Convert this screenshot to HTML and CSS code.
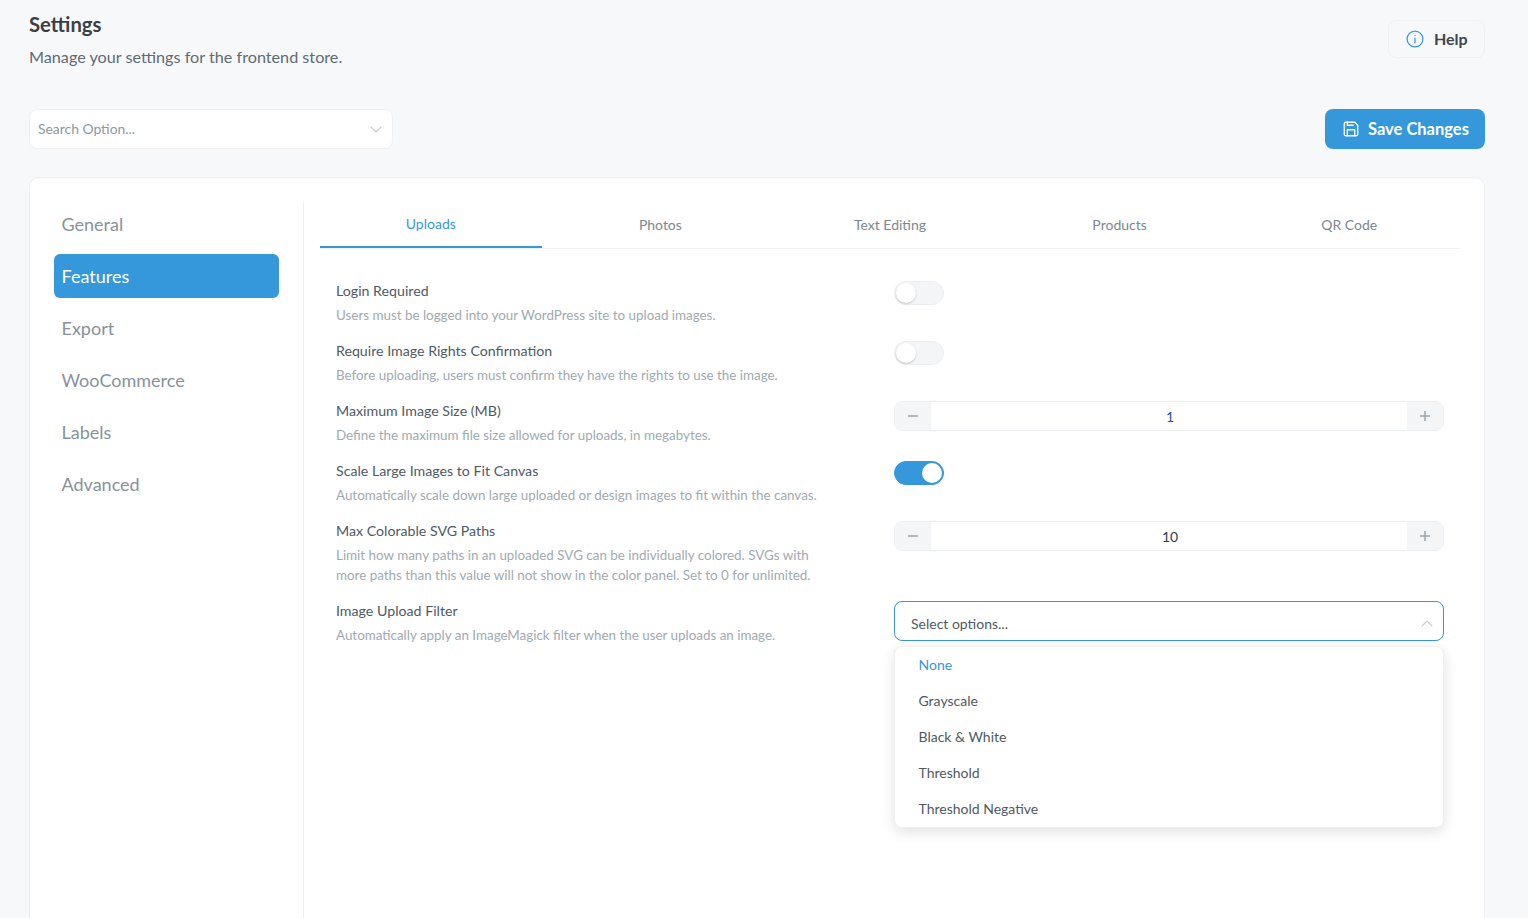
FILE: index.html
```html
<!DOCTYPE html>
<html lang="en">

<head>
    <meta charset="UTF-8">
    <meta name="viewport" content="width=device-width, initial-scale=1.0">
    <title>Settings</title>
    <link rel="stylesheet" href="styles.css">
</head>

<body>
    <div class="page">
        <header class="page-header">
            <div>
                <h1>Settings</h1>
                <p>Manage your settings for the frontend store.</p>
            </div>
            <button class="help-btn" type="button">
                <svg width="20" height="20" viewBox="0 0 24 24" fill="none" stroke="#3498db" stroke-width="1.5" stroke-linecap="round">
                    <circle cx="12" cy="12" r="9.5"></circle>
                    <path d="M12 11v5.5M12 7.5v.01"></path>
                </svg>
                <span>Help</span>
            </button>
        </header>

        <div class="toolbar">
            <div class="search-select">
                <span>Search Option...</span>
                <svg class="chevron" width="12" height="7" viewBox="0 0 12 7"><path d="M.8.8 6 6l5.2-5.2"></path></svg>
            </div>
            <button class="save-btn" type="button">
                <svg width="18" height="18" viewBox="0 0 24 24" fill="none" stroke="#fff" stroke-width="1.7" stroke-linejoin="round" stroke-linecap="round">
                    <path d="M5 3h12l4 4v12a2 2 0 0 1-2 2H5a2 2 0 0 1-2-2V5a2 2 0 0 1 2-2z"></path>
                    <path d="M7 21v-8h10v8M7 3v4h8"></path>
                </svg>
                <span>Save Changes</span>
            </button>
        </div>

        <div class="card">
            <nav class="side-nav">
                <a>General</a>
                <a class="active">Features</a>
                <a>Export</a>
                <a>WooCommerce</a>
                <a>Labels</a>
                <a>Advanced</a>
            </nav>

            <main class="content">
                <div class="tabs">
                    <a class="active">Uploads</a>
                    <a>Photos</a>
                    <a>Text Editing</a>
                    <a>Products</a>
                    <a>QR Code</a>
                </div>

                <div class="options">
                    <div class="option">
                        <div class="option-text">
                            <label>Login Required</label>
                            <p>Users must be logged into your WordPress site to upload images.</p>
                        </div>
                        <div class="option-control"><span class="switch"></span></div>
                    </div>

                    <div class="option">
                        <div class="option-text">
                            <label>Require Image Rights Confirmation</label>
                            <p>Before uploading, users must confirm they have the rights to use the image.</p>
                        </div>
                        <div class="option-control"><span class="switch"></span></div>
                    </div>

                    <div class="option">
                        <div class="option-text">
                            <label>Maximum Image Size (MB)</label>
                            <p>Define the maximum file size allowed for uploads, in megabytes.</p>
                        </div>
                        <div class="option-control">
                            <div class="stepper">
                                <span class="step"><svg width="10" height="10" viewBox="0 0 10 10"><path d="M0 5h10"></path></svg></span>
                                <span class="value value-blue">1</span>
                                <span class="step"><svg width="10" height="10" viewBox="0 0 10 10"><path d="M0 5h10M5 0v10"></path></svg></span>
                            </div>
                        </div>
                    </div>

                    <div class="option">
                        <div class="option-text">
                            <label>Scale Large Images to Fit Canvas</label>
                            <p>Automatically scale down large uploaded or design images to fit within the canvas.</p>
                        </div>
                        <div class="option-control"><span class="switch on"></span></div>
                    </div>

                    <div class="option option-tall">
                        <div class="option-text">
                            <label>Max Colorable SVG Paths</label>
                            <p>Limit how many paths in an uploaded SVG can be individually colored. SVGs with more paths than this value will not show in the color panel. Set to 0 for unlimited.</p>
                        </div>
                        <div class="option-control">
                            <div class="stepper">
                                <span class="step"><svg width="10" height="10" viewBox="0 0 10 10"><path d="M0 5h10"></path></svg></span>
                                <span class="value">10</span>
                                <span class="step"><svg width="10" height="10" viewBox="0 0 10 10"><path d="M0 5h10M5 0v10"></path></svg></span>
                            </div>
                        </div>
                    </div>

                    <div class="option">
                        <div class="option-text">
                            <label>Image Upload Filter</label>
                            <p>Automatically apply an ImageMagick filter when the user uploads an image.</p>
                        </div>
                        <div class="option-control">
                            <div class="filter-select">
                                <span>Select options...</span>
                                <svg class="chevron" width="12" height="7" viewBox="0 0 12 7"><path d="M.8 6.2 6 1l5.2 5.2"></path></svg>
                            </div>
                            <ul class="filter-menu">
                                <li class="selected">None</li>
                                <li>Grayscale</li>
                                <li>Black &amp; White</li>
                                <li>Threshold</li>
                                <li>Threshold Negative</li>
                            </ul>
                        </div>
                    </div>
                </div>
            </main>
        </div>
    </div>
</body>

</html>
```

FILE: styles.css
```css
* {
    box-sizing: border-box;
}

html,
body {
    height: 100%;
}

body {
    margin: 0;
    overflow: hidden;
    font-family: "Lato", "Noto Sans", sans-serif;
    background-color: #f7f8fa;
    color: #34495e;
}

.page {
    height: 100%;
    padding: 0 43px 0 29px;
}

.page-header {
    display: flex;
    justify-content: space-between;
    align-items: flex-start;
    height: 109px;
    padding-top: 12px;
}

h1 {
    margin: 0;
    font-size: 20.3px;
    line-height: 24px;
    font-weight: 700;
    color: #3a4046;
}

.page-header p {
    margin: 9px 0 0;
    font-size: 16.2px;
    line-height: 24px;
    color: #5f6b76;
}

button {
    font-family: inherit;
    cursor: pointer;
}

.help-btn {
    display: flex;
    align-items: center;
    gap: 9px;
    width: 97px;
    height: 38px;
    margin-top: 8px;
    padding: 0 0 2px 16px;
    border: 1px solid #eff1f3;
    border-radius: 8px;
    background-color: #f7f8fa;
    font-size: 16px;
    font-weight: 700;
    color: #3d4650;
}

.help-btn svg {
    margin-top: 2px;
}

.toolbar {
    display: flex;
    justify-content: space-between;
    height: 40px;
}

.search-select {
    display: flex;
    align-items: center;
    justify-content: space-between;
    width: 364px;
    padding: 0 10px 2px 8px;
    border: 1px solid #eef0f2;
    border-radius: 8px;
    background-color: white;
    font-size: 13.9px;
    color: #8b99a3;
}

.chevron {
    fill: none;
    stroke: #c4ccd1;
    stroke-width: 1.2;
}

.search-select .chevron {
    margin-top: 2px;
}

.save-btn {
    display: flex;
    align-items: center;
    gap: 8px;
    width: 160px;
    padding: 0 0 0 17px;
    border: none;
    border-radius: 8px;
    background-color: #3498db;
    color: white;
    font-size: 16.5px;
    font-weight: 700;
}

.card {
    display: flex;
    height: 760px;
    margin-top: 28px;
    padding: 24px 24px 0;
    background-color: white;
    border: 1px solid #eef0f2;
    border-radius: 10px;
}

.side-nav {
    display: flex;
    flex-direction: column;
    gap: 8px;
    width: 250px;
    padding-right: 24px;
    border-right: 1px solid #eceff1;
}

.side-nav a {
    display: flex;
    align-items: center;
    height: 44px;
    padding: 0 0 1px 7.5px;
    border-radius: 6px;
    font-size: 18px;
    color: #87929b;
}

.side-nav a.active {
    background-color: #3498db;
    color: white;
}

.content {
    flex: 1;
    padding-left: 16px;
}

.tabs {
    display: flex;
    gap: 8px;
    height: 47px;
    border-bottom: 1px solid #eef0f2;
}

.tabs a {
    flex: 1;
    text-align: center;
    padding-top: 13px;
    font-size: 14px;
    line-height: 20px;
    color: #7c8891;
}

.tabs a.active {
    height: 46px;
    padding-top: 12px;
    border-bottom: 2px solid #3498db;
    color: #3498db;
}

.options {
    padding: 32px 16px 0;
}

.option {
    display: flex;
    height: 60px;
}

.option-tall {
    height: 80px;
}

.option-text {
    width: 558px;
}

.option-text label {
    display: block;
    font-size: 14.2px;
    line-height: 20px;
    color: #4f5a64;
}

.option-text p {
    margin: 4px 0 0;
    width: 490px;
    font-size: 13.4px;
    line-height: 20px;
    color: #a0aab2;
}

.option-control {
    position: relative;
    width: 550px;
}

.switch {
    display: block;
    position: relative;
    width: 50px;
    height: 24px;
    border: 1px solid #eceff1;
    border-radius: 12px;
    background-color: #f4f5f7;
}

.switch::after {
    content: "";
    position: absolute;
    top: 1px;
    left: 1px;
    width: 20px;
    height: 20px;
    border-radius: 50%;
    background-color: white;
    box-shadow: 0 1px 2px rgba(0, 0, 0, 0.2);
}

.switch.on {
    border-color: #3498db;
    background-color: #3498db;
}

.switch.on::after {
    left: 27px;
    box-shadow: none;
}

.stepper {
    display: flex;
    height: 30px;
    border: 1px solid #eceff1;
    border-radius: 8px;
    overflow: hidden;
}

.step {
    display: flex;
    align-items: center;
    justify-content: center;
    width: 36px;
    background-color: #f4f5f7;
}

.step svg {
    fill: none;
    stroke: #9aa5ac;
    stroke-width: 1.5;
}

.value {
    flex: 1;
    padding: 6px 0 0 2px;
    text-align: center;
    font-size: 14px;
    color: #2c3e50;
}

.value-blue {
    color: #1f4fa3;
}

.filter-select {
    display: flex;
    align-items: center;
    justify-content: space-between;
    height: 40px;
    padding: 4px 10px 0 16px;
    border: 1px solid #3498db;
    border-radius: 8px;
    background-color: white;
    font-size: 14px;
    color: #4f5a64;
}

.filter-menu {
    position: absolute;
    top: 45px;
    left: 0;
    width: 100%;
    margin: 0;
    padding: 0;
    list-style: none;
    background-color: white;
    border: 1px solid #eef0f2;
    border-radius: 8px;
    box-shadow: 0 4px 14px rgba(0, 0, 0, 0.12);
}

.filter-menu li {
    height: 36px;
    padding: 8px 23.5px 0;
    font-size: 14px;
    line-height: 20px;
    color: #4f5a64;
}

.filter-menu li.selected {
    color: #3498db;
}
```
